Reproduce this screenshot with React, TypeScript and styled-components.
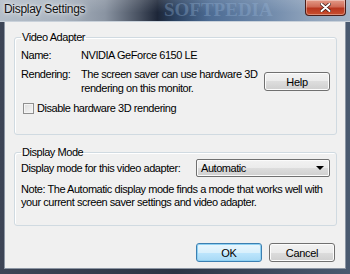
import React from "react";
import styled, { createGlobalStyle } from "styled-components";

const GlobalStyle = createGlobalStyle`
  html, body {
    margin: 0;
    padding: 0;
    background: #2e3646;
  }
`;

const Window = styled.div`
  width: 350px;
  height: 274px;
  display: flex;
  flex-direction: column;
  box-sizing: border-box;
  padding: 0 4px 5px 4px;
  background: linear-gradient(to right, #3d4556 0%, #2c3444 50%, #4a5a70 100%);
  font-family: "Liberation Sans", Arial, sans-serif;
  overflow: hidden;
`;

const TitleBar = styled.div`
  height: 22px;
  margin: 0 -4px;
  display: flex;
  align-items: flex-start;
  position: relative;
  background:
    linear-gradient(to bottom, rgba(255, 255, 255, 0.12) 0%, rgba(255, 255, 255, 0) 60%),
    linear-gradient(
      to right,
      #b3bdc8 0%,
      #a9b3bf 18%,
      #8a94a2 30%,
      #454e5e 40%,
      #1d2638 45%,
      #2a4160 50%,
      #4d6c94 60%,
      #6b86a8 75%,
      #8ea2bb 88%,
      #a3b2c4 100%
    );
  border-bottom: 1px solid #c9d1da;
  box-sizing: border-box;
`;

const Title = styled.span`
  margin: 1px 0 0 4px;
  font-size: 12px;
  letter-spacing: -0.3px;
  color: #111;
  text-shadow: 0 0 6px rgba(255, 255, 255, 0.9), 0 0 3px rgba(255, 255, 255, 0.8);
  line-height: 17px;
`;

const Watermark = styled.span`
  position: absolute;
  left: 164px;
  top: 0;
  font-family: "Liberation Serif", serif;
  font-weight: bold;
  font-size: 19px;
  line-height: 20px;
  color: rgba(150, 180, 215, 0.35);
  pointer-events: none;
`;

const CloseButton = styled.div`
  position: absolute;
  right: 4px;
  top: 0;
  width: 41px;
  height: 16px;
  box-sizing: border-box;
  border: 1px solid #4a1d18;
  border-top: none;
  border-radius: 0 0 4px 4px;
  background: linear-gradient(to bottom, #e39a88 0%, #cf6a56 45%, #b8361f 55%, #c9502f 100%);
  box-shadow: inset 0 0 0 1px rgba(255, 255, 255, 0.35);
  display: flex;
  align-items: center;
  justify-content: center;
`;

const Client = styled.div`
  flex: 1;
  background: #f0f0f0;
  border: 1px solid #8c96a4;
  border-top: none;
  box-sizing: border-box;
  padding: 9px 8px 0 9px;
  display: flex;
  flex-direction: column;
  font-size: 11px;
  letter-spacing: -0.45px;
  color: #000;
`;

const Group = styled.fieldset`
  margin: 0;
  padding: 0 6px 0 6px;
  border: 1px solid #d0dae1;
  border-radius: 3px;
  min-width: 0;
  box-shadow: inset 1px 1px 0 #fff;
`;

const Legend = styled.legend`
  padding: 0 1px;
  margin-left: 0px;
  line-height: 13px;
  font-size: 11px;
`;

const InfoGrid = styled.div`
  display: grid;
  grid-template-columns: 60px 1fr 67px;
  row-gap: 5px;
  align-items: start;
  margin-top: 4px;
`;

const Label = styled.span`
  line-height: 14px;
`;

const Value = styled.span<{ $span?: number }>`
  line-height: 14px;
  grid-column: ${(p) => (p.$span ? `span ${p.$span}` : "auto")};
`;

const Button = styled.button<{ $focused?: boolean }>`
  width: 66px;
  height: 19px;
  padding: 0;
  box-sizing: border-box;
  font-family: "Liberation Sans", Arial, sans-serif;
  font-size: 11px;
  letter-spacing: -0.3px;
  color: #000;
  border-radius: 3px;
  border: 1px solid ${(p) => (p.$focused ? "#3c7fb1" : "#707070")};
  background: ${(p) =>
    p.$focused
      ? "linear-gradient(to bottom, #eaf6fd 0%, #d9f0fc 50%, #bee6fd 50%, #a7d9f5 100%)"
      : "linear-gradient(to bottom, #f2f2f2 0%, #ebebeb 50%, #dddddd 50%, #cfcfcf 100%)"};
  box-shadow: inset 0 0 0 1px ${(p) => (p.$focused ? "#8fd1f3" : "#fcfcfc")};
`;

const HelpButton = styled(Button)`
  margin-top: 5px;
  justify-self: end;
`;

const CheckRow = styled.label`
  display: flex;
  align-items: center;
  gap: 3px;
  margin: 6px 0 19px 2px;
  line-height: 14px;
`;

const CheckBox = styled.span`
  width: 11px;
  height: 11px;
  box-sizing: border-box;
  border: 1px solid #8f8f8f;
  background: linear-gradient(135deg, #dcdcdc 0%, #f6f6f6 100%);
  box-shadow: inset 0 0 0 1px #f4f4f4;
`;

const SecondGroup = styled(Group)`
  margin-top: 11px;
  padding-bottom: 16px;
`;

const ModeRow = styled.div`
  display: flex;
  align-items: center;
  justify-content: space-between;
`;

const Select = styled.div`
  width: 134px;
  height: 18px;
  box-sizing: border-box;
  border: 1px solid #707070;
  border-radius: 2px;
  background: linear-gradient(to bottom, #f2f2f2 0%, #ebebeb 50%, #dddddd 50%, #cfcfcf 100%);
  box-shadow: inset 0 0 0 1px #fbfbfb;
  display: flex;
  align-items: center;
  justify-content: space-between;
  padding: 0 5px 0 4px;
`;

const Arrow = styled.span`
  width: 0;
  height: 0;
  border-left: 4px solid transparent;
  border-right: 4px solid transparent;
  border-top: 4px solid #000;
`;

const Note = styled.p`
  margin: 6px 0 0 0;
  line-height: 13px;
`;

const Footer = styled.div`
  display: flex;
  justify-content: flex-end;
  gap: 7px;
  margin-top: 17px;
  padding-right: 2px;
`;

export default function App() {
  return (
    <>
      <GlobalStyle />
      <Window>
        <TitleBar>
          <Title>Display Settings</Title>
          <Watermark>SOFTPEDIA</Watermark>
          <CloseButton>
            <svg width="11" height="9" viewBox="0 0 11 9">
              <path
                d="M1.5 1 L9.5 8 M9.5 1 L1.5 8"
                stroke="#3a1510"
                strokeWidth="3.4"
                strokeLinecap="round"
              />
              <path
                d="M1.5 1 L9.5 8 M9.5 1 L1.5 8"
                stroke="#ffffff"
                strokeWidth="2"
                strokeLinecap="round"
              />
            </svg>
          </CloseButton>
        </TitleBar>
        <Client>
          <Group>
            <Legend>Video Adapter</Legend>
            <InfoGrid>
              <Label>Name:</Label>
              <Value $span={2}>NVIDIA GeForce 6150 LE</Value>
              <Label>Rendering:</Label>
              <Value>
                The screen saver can use hardware 3D
                <br />
                rendering on this monitor.
              </Value>
              <HelpButton>Help</HelpButton>
            </InfoGrid>
            <CheckRow>
              <CheckBox />
              Disable hardware 3D rendering
            </CheckRow>
          </Group>
          <SecondGroup>
            <Legend>Display Mode</Legend>
            <ModeRow>
              <span>Display mode for this video adapter:</span>
              <Select>
                <span>Automatic</span>
                <Arrow />
              </Select>
            </ModeRow>
            <Note>
              Note: The Automatic display mode finds a mode that works well with
              <br />
              your current screen saver settings and video adapter.
            </Note>
          </SecondGroup>
          <Footer>
            <Button $focused>OK</Button>
            <Button>Cancel</Button>
          </Footer>
        </Client>
      </Window>
    </>
  );
}
